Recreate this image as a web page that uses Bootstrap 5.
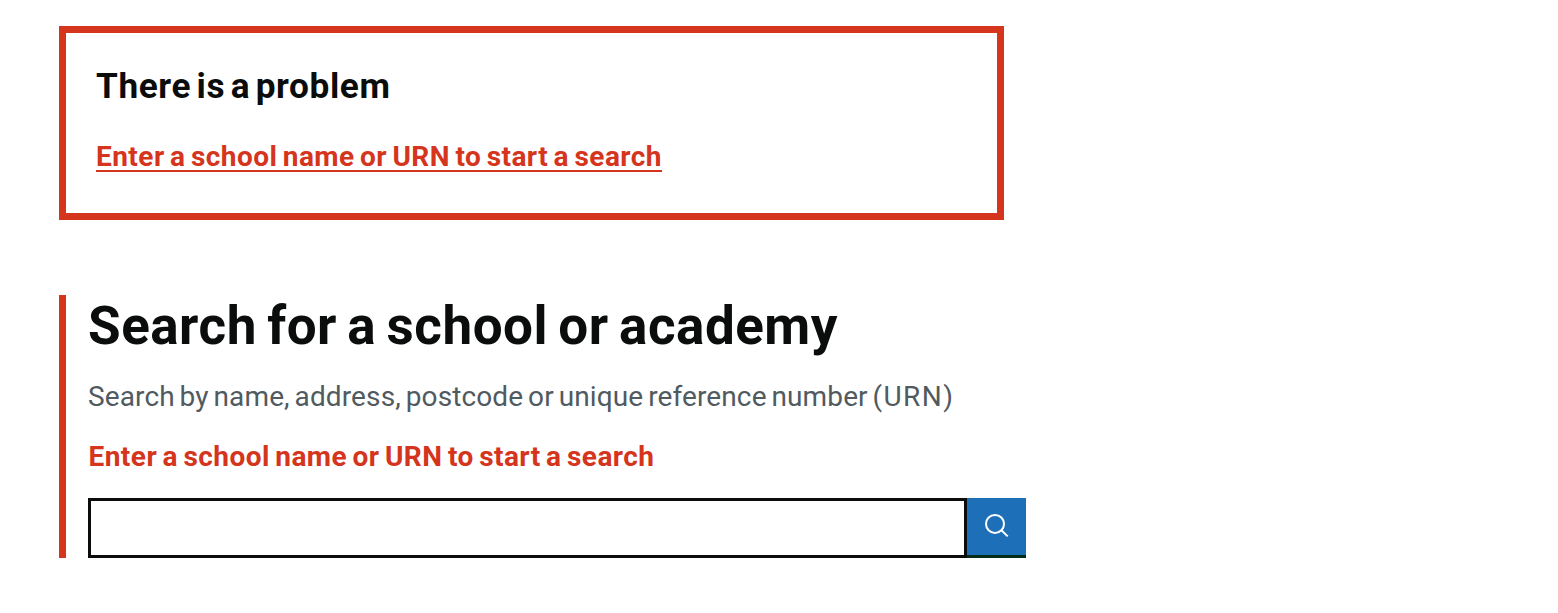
<!DOCTYPE html>
<html lang="en">
<head>
<meta charset="utf-8">
<meta name="viewport" content="width=device-width, initial-scale=1">
<title>Search for a school or academy</title>
<link href="https://cdn.jsdelivr.net/npm/bootstrap@5.3.0/dist/css/bootstrap.min.css" rel="stylesheet">
<style>
  body { font-family: Roboto, "Liberation Sans", sans-serif; color: #0b0c0c; font-size: 28px; padding: 26px 0 0 59px; }
  .error-summary { width: 945px; height: 194px; border: 7px solid #d4351c; padding: 32px 30px 0; }
  .error-summary h2 { font-size: 35.2px; line-height: 42px; margin-bottom: 29px; letter-spacing: .6px; word-spacing: -3.8px; }
  .error-link, .error-message { color: #d4351c; line-height: 42px; letter-spacing: .46px; word-spacing: -2px; }
  .error-link { text-decoration: underline; text-decoration-thickness: 2px; text-underline-offset: 4px; text-decoration-skip-ink: none; }
  .error-link:hover { color: #942514; }
  .search-group { width: 967px; height: 263px; margin-top: 75px; border-left: 7px solid #d4351c; padding-left: 22px; }
  .search-group h1 { font-size: 53px; line-height: 62px; margin-bottom: 19px; letter-spacing: .5px; word-spacing: -3.3px; }
  .hint { color: #505a5f; line-height: 42px; margin-bottom: 18px; letter-spacing: .12px; word-spacing: -2.2px; }
  .hint abbr { letter-spacing: 1.4px; text-decoration: none; cursor: inherit; }
  .error-message { margin-bottom: 20px; padding-left: .5px; }
  .search-field { height: 60px; border: 3px solid #0b0c0c; font-size: 28px; }
  .search-button { width: 59px; height: 60px; background: #1d70b8; border: 0; border-bottom: 3px solid #002d18; }
</style>
</head>
<body>
<section class="error-summary" role="alert">
  <h2 class="fw-bold">There is a problem</h2>
  <a class="error-link fw-bold d-inline-block" href="#school">Enter a school name or URN to start a search</a>
</section>
<form class="search-group">
  <h1 class="fw-bold"><label for="school">Search for a school or academy</label></h1>
  <p class="hint">Search by name, address, postcode or unique reference number <abbr>(URN)</abbr></p>
  <p class="error-message fw-bold">Enter a school name or URN to start a search</p>
  <div class="d-flex">
    <input id="school" class="search-field form-control rounded-0 shadow-none flex-grow-1" type="text">
    <button class="search-button btn rounded-0 p-0 flex-shrink-0 d-flex justify-content-center" type="submit" aria-label="Search">
      <svg width="59" height="57" viewBox="0 0 59 57" fill="none" stroke="#fff" stroke-width="2"><circle cx="28" cy="25.9" r="9"/><path d="M34.4 32.3 40.7 38.4"/></svg>
    </button>
  </div>
</form>
<script src="https://cdn.jsdelivr.net/npm/bootstrap@5.3.0/dist/js/bootstrap.bundle.min.js"></script>
</body>
</html>
